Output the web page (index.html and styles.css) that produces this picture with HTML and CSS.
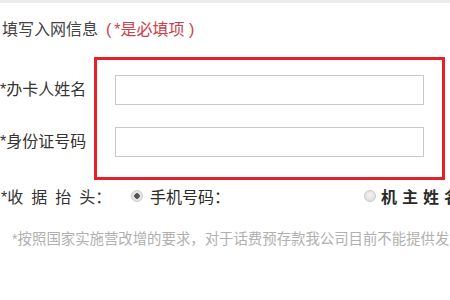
FILE: index.html
```html
<!DOCTYPE html>
<html lang="zh-CN">
<head>
<meta charset="utf-8">
<link rel="stylesheet" href="styles.css">
</head>
<body>
<div class="topbar"></div>
<div class="title">填写入网信息<span class="req"><span class="paren">(</span>*是必填项 )</span></div>
<div class="form">
  <div class="labels">
    <div class="label">*办卡人姓名</div>
    <div class="label">*身份证号码</div>
  </div>
  <div class="box">
    <div class="input"></div>
    <div class="input"></div>
  </div>
</div>
<div class="radios">
  <div class="rlabel">*<span class="sp">收据抬</span>头：</div>
  <div class="opt opt1"><span class="radio checked"></span><span class="otext">手机号码：</span></div>
  <div class="opt opt2"><span class="radio"></span><span class="otext spaced">机主姓名</span></div>
</div>
<div class="note">*按照国家实施营改增的要求，对于话费预存款我公司目前不能提供发</div>
</body>
</html>
```
FILE: styles.css
```css
html, body {
  margin: 0;
  padding: 0;
  background: #fff;
  width: 450px;
  height: 300px;
  overflow: hidden;
  font-family: "Liberation Sans", "Noto Sans CJK SC", sans-serif;
  color: #333;
}
.topbar {
  height: 3px;
  background: #ececec;
}
.title {
  margin-top: 18px;
  padding-left: 2px;
  font-size: 16px;
  line-height: 18px;
  color: #444;
  white-space: nowrap;
}
.req {
  color: #cc4049;
  margin-left: 8px;
}
.paren {
  margin-right: 3px;
}
.form {
  display: flex;
  margin-top: 18px;
}
.labels {
  width: 94px;
  flex-shrink: 0;
  padding-top: 18px;
  display: flex;
  flex-direction: column;
  gap: 22px;
}
.label {
  height: 30px;
  line-height: 30px;
  font-size: 16px;
  color: #333;
  white-space: nowrap;
}
.box {
  border: 3px solid #e2212a;
  padding: 15px 18px 20px 18px;
  width: 309px;
  flex-shrink: 0;
  display: flex;
  flex-direction: column;
  gap: 22px;
}
.input {
  height: 28px;
  border: 1px solid #c8c8c8;
  background: #fff;
}
.radios {
  display: flex;
  align-items: center;
  height: 32px;
  font-size: 16px;
  color: #333;
  white-space: nowrap;
  overflow: hidden;
}
.rlabel {
  width: 130px;
  flex-shrink: 0;
  padding-left: 1px;
}
.sp {
  letter-spacing: 8px;
}
.opt {
  display: flex;
  align-items: center;
  flex-shrink: 0;
}
.opt1 {
  width: 233px;
}
.radio {
  width: 10px;
  height: 10px;
  border: 1px solid #c9c9c9;
  border-radius: 50%;
  background: radial-gradient(circle at 50% 40%, #f4f4f4, #d6d6d6);
  margin-right: 5px;
  flex-shrink: 0;
}
.radio.checked {
  background: radial-gradient(circle, #555 0 2.5px, #e6e6e6 3px);
}
.opt1 .radio {
  margin-right: 7px;
}
.otext {
  color: #2a2a2a;
}
.spaced {
  letter-spacing: 5px;
  font-weight: bold;
}
.note {
  margin-top: 18px;
  padding-left: 12px;
  font-size: 14.4px;
  line-height: 18px;
  color: #b0b0b0;
  white-space: nowrap;
  overflow: hidden;
}
```
